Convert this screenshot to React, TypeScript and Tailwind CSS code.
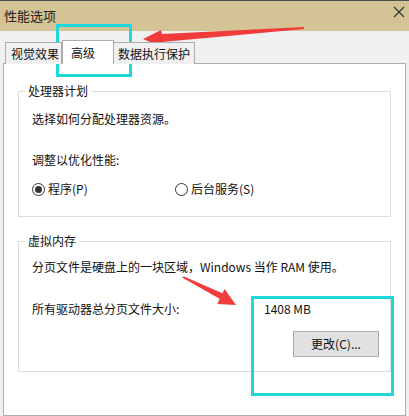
import React from "react";

const font = { fontFamily: '"Noto Sans CJK SC", "Noto Sans", sans-serif' };

function Radio({ checked, label }: { checked?: boolean; label: string }) {
  return (
    <div className="flex items-center">
      <span className="flex h-[13px] w-[13px] items-center justify-center rounded-full border border-[#333333] bg-white">
        {checked && <span className="h-[7px] w-[7px] rounded-full bg-[#333333]" />}
      </span>
      <span className="ml-[3px]">{label}</span>
    </div>
  );
}

function Group({ title, children, className }: { title: string; children: React.ReactNode; className?: string }) {
  return (
    <div className={"relative mx-[14px] border border-[#dcdcdc] " + (className ?? "")}>
      <span className="absolute -top-[9px] left-[6px] bg-white px-[3px] leading-[16px]">{title}</span>
      {children}
    </div>
  );
}

export default function App() {
  return (
    <div
      className="relative flex h-[416px] w-[409px] flex-col overflow-hidden bg-[#f0f0f0] text-[12px] text-[#111]"
      style={font}
    >
      {/* title bar */}
      <div className="flex h-[31px] shrink-0 items-center justify-between border-t border-[#4d4d4d] bg-[#d4c395] pl-[4px] pr-[4px]">
        <span className="text-[13px] text-[#222]">性能选项</span>
        <svg width="12" height="12" viewBox="0 0 12 12" className="-mt-[8px]">
          <path d="M1 1 L11 11 M11 1 L1 11" stroke="#333" strokeWidth="1.2" />
        </svg>
      </div>

      {/* tabs */}
      <div className="relative z-10 -mb-[1px] mt-[9px] flex h-[24px] items-end pl-[5px]">
        <div className="flex h-[22px] w-[57px] items-center border border-b-0 border-[#acacac] bg-[#f0f0f0] pl-[5px]">
          视觉效果
        </div>
        <div className="flex h-[24px] w-[52px] items-center border border-b-0 border-[#acacac] bg-white pl-[8px]">
          高级
        </div>
        <div className="flex h-[22px] w-[81px] items-center border border-b-0 border-l-0 border-[#acacac] bg-[#f0f0f0] pl-[4px]">
          数据执行保护
        </div>
      </div>

      {/* panel */}
      <div className="mx-[3px] flex-1 border border-[#acacac] bg-white">
        <Group title="处理器计划" className="mt-[27px] pl-[13px] pt-[19px] pb-[19px]">
          <div className="leading-[16px]">选择如何分配处理器资源。</div>
          <div className="mt-[25px] leading-[16px]">调整以优化性能:</div>
          <div className="mt-[13px] flex leading-[16px]">
            <div className="w-[143px]">
              <Radio checked label="程序(P)" />
            </div>
            <Radio label="后台服务(S)" />
          </div>
        </Group>

        <Group title="虚拟内存" className="mt-[24px] pl-[13px] pt-[17px] pb-[14px]">
          <div className="leading-[16px]">分页文件是硬盘上的一块区域，Windows 当作 RAM 使用。</div>
          <div className="mt-[26px] flex leading-[16px]">
            <span className="w-[232px]">所有驱动器总分页文件大小:</span>
            <span>1408 MB</span>
          </div>
          <div className="mt-[14px] flex">
            <button className="ml-[261px] h-[26px] w-[86px] border border-[#adadad] bg-[#e1e1e1] text-[12px] text-[#111]">
              更改(C)...
            </button>
          </div>
        </Group>
      </div>

      {/* annotations */}
      <div className="absolute left-[56px] top-[24px] h-[53px] w-[76px] border-[3px] border-[#1dd8d8]" />
      <div className="absolute left-[251px] top-[296px] h-[100px] w-[143px] border-[3px] border-[#1dd8d8]" />
      <svg className="pointer-events-none absolute inset-0" width="409" height="416">
        <polygon
          points="304,27 162,34 161,30 143,39 161,47 162,42 304,29"
          fill="#f23b3b"
        />
        <polygon
          points="182.5,277.8 219.6,298.7 217.4,304 236,305 224.6,288.9 222.4,293.3 183.5,276.2"
          fill="#f23b3b"
        />
      </svg>
    </div>
  );
}
